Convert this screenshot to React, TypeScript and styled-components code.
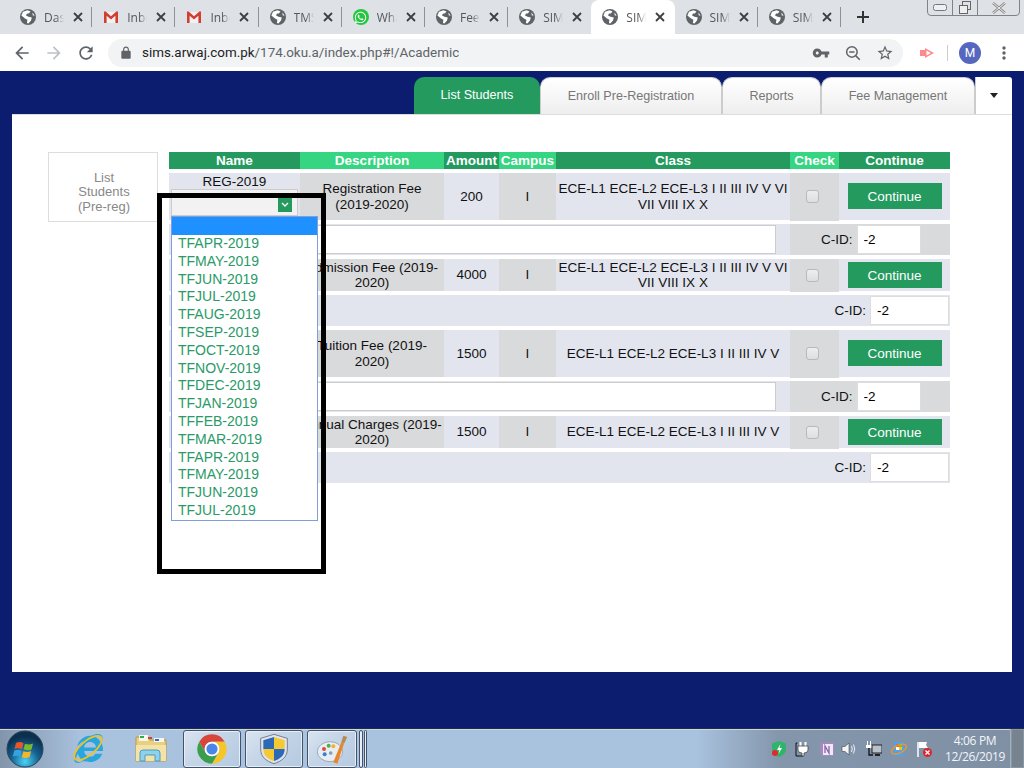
import React from "react";
import styled, { createGlobalStyle } from "styled-components";
import { FaInternetExplorer, FaWhatsapp } from "react-icons/fa";

const Global = createGlobalStyle`
  html, body { margin: 0; padding: 0; background: #0c1d6f; }
  * { box-sizing: border-box; }
`;
const green = "#249a5f";
const mint = "#36d582";
const blueCell = "#e2e5ee";
const grayCell = "#d9dadc";

const Root = styled.div`
  position: relative; width: 1024px; height: 768px; overflow: hidden;
  display: flex; flex-direction: column;
  font-family: "Liberation Sans", Arial, sans-serif; font-size: 13.5px; color: #111;
`;
/* Browser chrome */
const TabStrip = styled.div`
  height: 34px; background: #dee1e6; display: flex; align-items: stretch; padding-left: 9px; position: relative;
`;
const BrowserTab = styled.div<{ $active?: boolean; $sep?: boolean }>`
  width: 83.2px; flex: none; display: flex; align-items: center; padding: 0 9px 0 11px; gap: 8px; position: relative;
  background: ${p => (p.$active ? "#fff" : "transparent")};
  border-radius: 8px 8px 0 0;
  &::after {
    content: ""; position: absolute; right: 0; top: 7px; height: 20px; width: 1px;
    background: ${p => (p.$sep ? "#8e9196" : "transparent")};
  }
`;
const TabIcon = styled.svg`width: 16px; height: 16px; flex: none;`;
const WaBadge = styled.span`
  width: 16px; height: 16px; border-radius: 50%; background: #25c63f; color: #fff; flex: none;
  display: flex; align-items: center; justify-content: center; font-size: 13px;
`;
const TabTitle = styled.span`
  width: 20px; flex: none; overflow: hidden; white-space: nowrap; font: 12px "Open Sans", sans-serif; color: #55585c;
  -webkit-mask-image: linear-gradient(90deg, #000 60%, transparent);
  mask-image: linear-gradient(90deg, #000 60%, transparent);
`;
const CloseGlyph = styled.svg`width: 10px; height: 10px; flex: none; margin-left: 1px;`;
const NewTab = styled.svg`width: 14px; height: 14px; margin: 10px 0 0 15px; flex: none;`;
const WindowControls = styled.div`
  position: absolute; left: 927px; top: -1px; width: 93px; height: 17px; display: flex;
  border: 1px solid #7f8388; border-radius: 0 0 4px 4px;
`;
const WinButton = styled.div<{ $w: number; $last?: boolean }>`
  width: ${p => p.$w}px; display: flex; align-items: center; justify-content: center;
  border-right: ${p => (p.$last ? "0" : "1px solid #7f8388")};
`;
const Toolbar = styled.div`
  height: 37px; background: #fff; display: flex; align-items: center; padding: 0 0 0 12px;
`;
const NavIcon = styled.svg`width: 20px; height: 20px; flex: none; margin-right: 12px;`;
const Omnibox = styled.div`
  width: 795px; height: 28px; margin-right: 15px; background: #f1f3f4; border-radius: 14px;
  display: flex; align-items: center; padding: 0 9px 0 11px; flex: none;
`;
const Lock = styled.svg`width: 14px; height: 14px; flex: none; margin-right: 9px;`;
const Url = styled.div`flex: 1; font: 13.4px Roboto, sans-serif; color: #5f6368; white-space: nowrap;`;
const Host = styled.span`color: #202124;`;
const OmniIcon = styled.svg`width: 18px; height: 18px; flex: none; margin-left: 14px;`;
const ToolDivider = styled.div`width: 1px; height: 16px; background: #ccc; margin: 0 11px 0 11px; flex: none;`;
const ExtIcon = styled.svg`width: 18px; height: 16px; flex: none;`;
const Avatar = styled.div`
  width: 22px; height: 22px; border-radius: 50%; background: #5667c0; color: #fff; font: 12px Roboto, sans-serif;
  display: flex; align-items: center; justify-content: center; flex: none;
`;
const Dots = styled.svg`width: 4px; height: 14px; flex: none; margin-left: 21px;`;

/* Web page */
const Page = styled.main`
  flex: 1; background: #0c1d6f; padding: 6px 12px 56px; display: flex; flex-direction: column;
`;
const TabRow = styled.nav`height: 37px; display: flex; justify-content: flex-end; flex: none;`;
const PageTab = styled.div<{ $w: number; $active?: boolean }>`
  width: ${p => p.$w}px; height: 37px; border-radius: 10px 10px 0 0; display: flex; align-items: center; justify-content: center;
  font-size: 12.6px; padding-bottom: ${p => (p.$active ? "2px" : "1px")};
  color: ${p => (p.$active ? "#fff" : "#777")};
  background: ${p => (p.$active ? green : "linear-gradient(#ffffff, #eeeeee)")};
  border: ${p => (p.$active ? "0" : "1px solid #ccc")};
  border-bottom: 0;
`;
const CaretTab = styled.div`
  width: 37px; height: 37px; background: #fff; display: flex; align-items: center; justify-content: center;
  border-radius: 0 3px 0 0; border-left: 1px solid #ccc;
`;
const Caret = styled.div`width: 0; height: 0; border: 4px solid transparent; border-top: 5px solid #222; border-bottom: 0;`;
const Panel = styled.section`
  flex: 1; background: #fff; border-top: 1px solid #ddd; padding: 37px 62px 0 36px; display: flex; gap: 11px; align-items: flex-start;
`;
const SideBox = styled.div`
  width: 110px; height: 70px; border: 1px solid #ddd; display: flex; align-items: center; justify-content: center;
  text-align: center; color: #888; font-size: 13px; line-height: 14.5px; padding: 11px 26px 0 28px;
`;
const Table = styled.div`width: 781px; display: flex; flex-direction: column; gap: 4px;`;
const cols = "131px 144px 55px 57px 234px 49px 111px";
const HeadRow = styled.div`display: grid; grid-template-columns: ${cols}; height: 17px;`;
const HeadCell = styled.div<{ $light?: boolean }>`
  background: ${p => (p.$light ? mint : green)}; color: #fff; font-weight: bold; font-size: 13.5px; padding-bottom: 1px;
  display: flex; align-items: center; justify-content: center; white-space: nowrap;
`;
const DataRow = styled.div<{ $h: number }>`display: grid; grid-template-columns: ${cols}; height: ${p => p.$h}px;`;
const Cell = styled.div<{ $gray?: boolean }>`
  background: ${p => (p.$gray ? grayCell : blueCell)}; display: flex; align-items: center; justify-content: center;
  text-align: center; line-height: 15.2px; overflow: hidden; white-space: pre-line;
`;
const NameCell = styled(Cell)`
  flex-direction: column; justify-content: flex-start; padding-top: 1px; line-height: 15px; overflow: visible;
`;
const CheckCell = styled(Cell)`justify-content: flex-start; padding-left: 16px; height: calc(100% + 1px); position: relative;`;
const Check = styled.span<{ $tall: boolean }>`
  width: 13px; height: 13px; border: 1px solid #b9b9b9; border-radius: 3px; background: linear-gradient(#eee, #dedede);
  margin-top: ${p => (p.$tall ? "-2px" : "0")};
`;
const ContinueBtn = styled.button<{ $tall: boolean }>`
  width: 94px; height: 26px; border: 0; padding: 0; background: ${green}; color: #fff;
  margin-top: ${p => (p.$tall ? "-1px" : "0")};
  font: 13.5px "Liberation Sans", Arial, sans-serif;
`;
const FakeSelect = styled.div`
  width: 127px; height: 27px; flex: none; background: #f2f2f2; border: 1px solid #ccc; align-self: flex-start; margin-left: 2px;
  display: flex; justify-content: flex-end; align-items: flex-end; padding: 0 5px 3px 0; position: relative; z-index: 1;
`;
const SelectArrow = styled.div`width: 14px; height: 14px; background: ${green}; display: flex; align-items: center; justify-content: center;`;
const SubRow = styled.div`display: grid; grid-template-columns: 621px 160px; height: 31px;`;
const SubLeft = styled.div`background: ${blueCell}; padding: 1px 14px 1px 2px; display: flex;`;
const NoteInput = styled.input`
  flex: 1; min-width: 0; height: 29px; border: 1px solid #ccc; background: #fff; padding: 0 6px; font: 13.5px "Liberation Sans", Arial, sans-serif;
`;
const SubRight = styled.div`background: ${grayCell}; display: flex; align-items: center; padding-left: 31px; gap: 4px;`;
const WideSub = styled.div`
  background: ${blueCell}; height: 31px; display: flex; align-items: center; justify-content: flex-end; gap: 4px; padding-right: 1px;
`;
const Label = styled.span`font-size: 13.5px;`;
const IdInput = styled.input<{ $w: number }>`
  width: ${p => p.$w}px; height: 29px; border: 1px solid #ddd; background: #fff; padding: 0 6px; color: #000;
  font: 13.5px "Liberation Sans", Arial, sans-serif; outline: 0;
`;
/* Open list and hand-drawn annotation, both lying over the page */
const DropList = styled.ul`
  position: absolute; left: 171px; top: 216px; width: 147px; height: 305px; margin: 0; padding: 0; list-style: none;
  background: #fff; border: 1px solid #7f9fd6; z-index: 5;
`;
const Opt = styled.li<{ $sel?: boolean }>`
  height: ${p => (p.$sel ? "18px" : "17.8px")}; line-height: 17.8px; padding-left: 6px; font-size: 14px; color: #2a9a68;
  background: ${p => (p.$sel ? "#1e90ff" : "transparent")};
`;
const Frame = styled.div`
  position: absolute; left: 157px; top: 193px; width: 169px; height: 381px; border: 5px solid #000; z-index: 6; pointer-events: none;
`;

/* Taskbar */
const Taskbar = styled.footer`
  height: 40px; flex: none; display: flex; align-items: stretch; position: relative;
  background: linear-gradient(90deg, #8395aa 0, #a9c2de 8%, #a9c2de 68%, #8496ac 76%, #7f90a4 100%);
  border-top: 1px solid #1f2c4a; box-shadow: inset 0 1px 0 #c9d6e6;
`;
const Orb = styled.svg`width: 38px; height: 38px; margin: 0 0 0 6px; flex: none; align-self: center;`;
const QuickIcon = styled.div<{ $ml: number }>`
  margin-left: ${p => p.$ml}px; width: 36px; display: flex; align-items: center; justify-content: center; flex: none; font-size: 29px; position: relative; color: #2aa6df;
`;
const Ring = styled.svg`position: absolute; width: 36px; height: 36px; left: 0; top: 1px;`;
const TaskBtn = styled.div<{ $w: number; $ml: number }>`
  width: ${p => p.$w}px; margin-left: ${p => p.$ml}px; flex: none; margin-top: 1px;
  border: 1px solid #44536a; border-radius: 3px; display: flex; align-items: center; justify-content: center;
  background: linear-gradient(135deg, #d9e4f0 0, #c6d6e8 40%, #b4c9e0 100%); box-shadow: inset 0 0 0 1px #e7eef6;
`;
const TaskGlyph = styled.svg`width: 32px; height: 32px;`;
const Tray = styled.div`margin-left: auto; display: flex; align-items: center; flex: none; padding-right: 8px;`;
const TrayIcon = styled.svg<{ $mr: number }>`width: 16px; height: 16px; margin-right: ${p => p.$mr}px; flex: none;`;
const Clock = styled.div`
  width: 68px; margin-left: 9px; margin-right: 7px; padding-top: 1px; text-align: center; color: #f2f5f9; font: 12px/16.5px "Open Sans", sans-serif; letter-spacing: -.35px;
`;
const ShowDesktop = styled.div`
  position: absolute; right: 0; top: 0; bottom: 0; width: 14px; background: #77838f; border-left: 1px solid #a5b0bb; box-shadow: inset 0 0 0 1px #8a96a2;
`;

const Globe = () => (
  <TabIcon viewBox="0 0 16 16">
    <circle cx="8" cy="8" r="8" fill="#5f6368" />
    <path d="M3 2.8 7.5 1.2 10.5 2.4 8.8 4.6 7 4.5 6 6.6 8.6 7.8 11.8 8.4 11 11.6 8.4 14.6 6.9 14 7.4 10.8 5 9.4 1.4 6.4Z" fill="#fff" />
    <path d="M12.4 3.6 14.6 6.4 12.8 6.6Z" fill="#fff" />
  </TabIcon>
);
const Gmail = () => (
  <TabIcon viewBox="0 0 16 16">
    <rect x="1" y="3" width="14" height="11" fill="#f1f1f1" />
    <path d="M1 14V2.5h1.6L8 7.2l5.4-4.7H15V14h-2.6V6.8L8 10.4 3.6 6.8V14Z" fill="#d23f31" />
  </TabIcon>
);
const Close = ({ c = "#3c4043" }: { c?: string }) => (
  <CloseGlyph viewBox="0 0 10 10"><path d="M1 1l8 8M9 1l-8 8" stroke={c} strokeWidth="1.8" /></CloseGlyph>
);
const bTabs = [
  { k: "g", t: "Dashboard" }, { k: "m", t: "Inbox" }, { k: "m", t: "Inbox" }, { k: "g", t: "TMS" }, { k: "w", t: "WhatsApp" },
  { k: "g", t: "Fee" }, { k: "g", t: "SIMS" }, { k: "g", t: "SIMS", active: true }, { k: "g", t: "SIMS" }, { k: "g", t: "SIMS" },
];
const ChromeLogo = () => (
  <TaskGlyph viewBox="0 0 24 24">
    <path d="M21.53 6.5A11 11 0 0 0 2.47 6.5L7.24 14.75A5.5 5.5 0 0 1 12 6.5Z" fill="#d8453a" />
    <path d="M12 23A11 11 0 0 0 21.53 6.5L12 6.5A5.5 5.5 0 0 1 16.76 14.75Z" fill="#f5c52c" />
    <path d="M2.47 6.5A11 11 0 0 0 12 23L16.76 14.75A5.5 5.5 0 0 1 7.24 14.75Z" fill="#3a9e4c" />
    <circle cx="12" cy="12" r="5.5" fill="#fff" /><circle cx="12" cy="12" r="4.2" fill="#4a86e8" />
  </TaskGlyph>
);
const options = ["TFAPR", "TFMAY", "TFJUN", "TFJUL", "TFAUG", "TFSEP", "TFOCT", "TFNOV", "TFDEC", "TFJAN", "TFFEB", "TFMAR", "TFAPR", "TFMAY", "TFJUN", "TFJUL"];
const rows = [
  { name: "REG-2019", desc: "Registration Fee\n(2019-2020)", amt: "200", cls: "ECE-L1 ECE-L2 ECE-L3 I II III IV V VI VII VIII IX X", h: 47, sel: true, wide: false },
  { name: "", desc: "Admission Fee (2019-2020)", amt: "4000", cls: "ECE-L1 ECE-L2 ECE-L3 I II III IV V VI VII VIII IX X", h: 32, wide: true },
  { name: "", desc: "Tuition Fee (2019-2020)", amt: "1500", cls: "ECE-L1 ECE-L2 ECE-L3 I II III IV V", h: 47, wide: false },
  { name: "", desc: "Annual Charges (2019-2020)", amt: "1500", cls: "ECE-L1 ECE-L2 ECE-L3 I II III IV V", h: 32, wide: true },
];

export default function App() {
  return (
    <Root>
      <Global />
      <TabStrip>
        {bTabs.map((t, i) => (
          <BrowserTab key={i} $active={t.active} $sep={!t.active && i !== 6}>
            {t.k === "g" && <Globe />}
            {t.k === "m" && <Gmail />}
            {t.k === "w" && <WaBadge><FaWhatsapp /></WaBadge>}
            <TabTitle>{t.t}</TabTitle>
            <Close />
          </BrowserTab>
        ))}
        <NewTab viewBox="0 0 14 14"><path d="M7 1v12M1 7h12" stroke="#333" strokeWidth="2" /></NewTab>
        <WindowControls>
          <WinButton $w={25}><svg width="14" height="7"><rect x=".5" y=".5" width="13" height="6" rx="2" fill="#eef0f3" stroke="#777" /></svg></WinButton>
          <WinButton $w={25}><svg width="14" height="13"><rect x="4.5" y=".5" width="8" height="8" fill="none" stroke="#666" /><rect x="1.5" y="4.5" width="8" height="8" fill="#eee" stroke="#666" /></svg></WinButton>
          <WinButton $w={41} $last><svg width="16" height="12"><path d="M2 1l12 10M14 1L2 11" stroke="#888" strokeWidth="2.5" /><path d="M2 1l12 10M14 1L2 11" stroke="#eee" strokeWidth="1" /></svg></WinButton>
        </WindowControls>
      </TabStrip>
      <Toolbar>
        <NavIcon viewBox="0 0 24 24"><path fill="#5f6368" d="M20 11H7.83l5.59-5.59L12 4l-8 8 8 8 1.41-1.41L7.83 13H20v-2z" /></NavIcon>
        <NavIcon viewBox="0 0 24 24"><path fill="#bdc1c6" d="M12 4l-1.41 1.41L16.17 11H4v2h12.17l-5.58 5.59L12 20l8-8z" /></NavIcon>
        <NavIcon viewBox="0 0 24 24"><path fill="#5f6368" d="M17.65 6.35C16.2 4.9 14.21 4 12 4c-4.42 0-7.99 3.58-7.99 8s3.57 8 7.99 8c3.73 0 6.84-2.55 7.73-6h-2.08c-.82 2.33-3.04 4-5.65 4-3.31 0-6-2.69-6-6s2.69-6 6-6c1.66 0 3.14.69 4.22 1.78L13 11h7V4l-2.35 2.35z" /></NavIcon>
        <Omnibox>
          <Lock viewBox="0 0 24 24"><path fill="#5f6368" d="M18 8h-1V6c0-2.76-2.24-5-5-5S7 3.24 7 6v2H6c-1.1 0-2 .9-2 2v10c0 1.1.9 2 2 2h12c1.1 0 2-.9 2-2V10c0-1.1-.9-2-2-2zM9 6c0-1.66 1.34-3 3-3s3 1.34 3 3v2H9V6z" /></Lock>
          <Url><Host>sims.arwaj.com.pk</Host>/174.oku.a/index.php#!/Academic</Url>
          <OmniIcon viewBox="0 0 24 24"><path fill="#5f6368" d="M12.65 10C11.83 7.67 9.61 6 7 6c-3.31 0-6 2.69-6 6s2.69 6 6 6c2.61 0 4.83-1.67 5.65-4H17v4h4v-4h2v-4H12.65zM7 14c-1.1 0-2-.9-2-2s.9-2 2-2 2 .9 2 2-.9 2-2 2z" /></OmniIcon>
          <OmniIcon viewBox="0 0 24 24"><circle cx="10.5" cy="10.5" r="7" fill="none" stroke="#5f6368" strokeWidth="2" /><path d="M7 10.5h7M15.5 15.5 21 21" stroke="#5f6368" strokeWidth="2" /></OmniIcon>
          <OmniIcon viewBox="0 0 24 24"><path fill="#5f6368" d="M22 9.24l-7.19-.62L12 2 9.19 8.63 2 9.24l5.46 4.73L5.82 21 12 17.27 18.18 21l-1.63-7.03L22 9.24zM12 15.4l-3.76 2.27 1-4.28-3.32-2.88 4.38-.38L12 6.1l1.71 4.04 4.38.38-3.32 2.88 1 4.28L12 15.4z" /></OmniIcon>
        </Omnibox>
        <ExtIcon viewBox="0 0 18 16"><path d="M2 5h5V3l9 5-9 5v-2H2Z" fill="#ff8a8e" /><path d="M8.500 5.600 12.800 8 8.500 10.400Z" fill="#fff" /></ExtIcon>
        <ToolDivider />
        <Avatar>M</Avatar>
        <Dots viewBox="0 0 4 14"><circle cx="2" cy="2" r="1.7" fill="#5f6368" /><circle cx="2" cy="7" r="1.7" fill="#5f6368" /><circle cx="2" cy="12" r="1.7" fill="#5f6368" /></Dots>
      </Toolbar>
      <Page>
        <TabRow>
          <PageTab $w={126} $active>List Students</PageTab>
          <PageTab $w={182}>Enroll Pre-Registration</PageTab>
          <PageTab $w={99}>Reports</PageTab>
          <PageTab $w={154}>Fee Management</PageTab>
          <CaretTab><Caret /></CaretTab>
        </TabRow>
        <Panel>
          <SideBox>List Students (Pre-reg)</SideBox>
          <Table>
            <HeadRow>
              <HeadCell>Name</HeadCell><HeadCell $light>Description</HeadCell><HeadCell>Amount</HeadCell>
              <HeadCell $light>Campus</HeadCell><HeadCell>Class</HeadCell><HeadCell $light>Check</HeadCell><HeadCell>Continue</HeadCell>
            </HeadRow>
            {rows.map((r, i) => (
              <React.Fragment key={i}>
                <DataRow $h={r.h}>
                  <NameCell>
                    {r.name}
                    {r.sel && (
                      <FakeSelect>
                        <SelectArrow><svg width="8" height="6"><path d="M1 1l3 3 3-3" fill="none" stroke="#fff" strokeWidth="1.3" /></svg></SelectArrow>
                      </FakeSelect>
                    )}
                  </NameCell>
                  <Cell $gray>{r.desc}</Cell>
                  <Cell>{r.amt}</Cell>
                  <Cell $gray>I</Cell>
                  <Cell>{r.cls}</Cell>
                  <CheckCell $gray><Check $tall={r.h > 40} /></CheckCell>
                  <Cell><ContinueBtn $tall={r.h > 40}>Continue</ContinueBtn></Cell>
                </DataRow>
                {r.wide ? (
                  <WideSub><Label>C-ID:</Label><IdInput $w={79} defaultValue="-2" /></WideSub>
                ) : (
                  <SubRow>
                    <SubLeft><NoteInput readOnly /></SubLeft>
                    <SubRight><Label>C-ID:</Label><IdInput $w={64} defaultValue="-2" /></SubRight>
                  </SubRow>
                )}
              </React.Fragment>
            ))}
          </Table>
        </Panel>
      </Page>
      <Taskbar>
        <Orb viewBox="0 0 38 38">
          <defs>
            <radialGradient id="orb" cx="50%" cy="85%" r="70%"><stop offset="0" stopColor="#4fd3f5" /><stop offset=".55" stopColor="#14618f" /><stop offset="1" stopColor="#0d2f4e" /></radialGradient>
          </defs>
          <circle cx="19" cy="19" r="18" fill="url(#orb)" stroke="#28465f" />
          <path d="M10 13c3-1.5 5-1 7.5.2l-1.5 6c-2.500-1-5-1.500-7.500-.2Z" fill="#e8562a" />
          <path d="M19 13.700c2.500 1 5 1.300 8-.2l-1.500 6c-3 1.300-5 1-8-.2Z" fill="#7cb92e" />
          <path d="M8.300 20.500c2.500-1.200 5-1 7.300.2l-1.500 6c-2.500-1.200-5-1.300-7.400 0Z" fill="#35a3e0" />
          <path d="M17.300 21.200c2.700 1 5 1.200 7.800-.2l-1.500 6c-3 1.300-5.300 1.200-7.800.2Z" fill="#f5b72a" />
        </Orb>
        <QuickIcon $ml={26}>
          <FaInternetExplorer />
          <Ring viewBox="0 0 36 36"><ellipse cx="18" cy="18" rx="17" ry="7" transform="rotate(-40 18 18)" fill="none" stroke="#f2c21e" strokeWidth="1.800" /></Ring>
        </QuickIcon>
        <QuickIcon $ml={27}>
          <svg width="34" height="30" viewBox="0 0 34 30">
            <path d="M2 3h12l2 3h16v21H2Z" fill="#e9cf80" stroke="#b99a4a" />
            <rect x="5" y="1" width="9" height="6" fill="#f8f6ea" /><rect x="6" y="2" width="4" height="2" fill="#2bb04a" />
            <rect x="20" y="4" width="10" height="4" fill="#f8f6ea" /><rect x="21" y="5" width="4" height="2" fill="#2a6fd0" />
            <rect x="14" y="3" width="4" height="2" fill="#d84030" />
            <path d="M2 11h30v16H2Z" fill="#f4e3a6" />
            <path d="M6 27V19q0-3 3-3h14q3 0 3 3v8h-5v-6H11v6Z" fill="#8fd0ec" stroke="#4d9cc0" />
          </svg>
        </QuickIcon>
        <TaskBtn $w={58} $ml={14}><ChromeLogo /></TaskBtn>
        <TaskBtn $w={58} $ml={4}>
          <TaskGlyph viewBox="0 0 24 24">
            <path d="M12 1 22 4v8c0 6-4 9-10 11C6 21 2 18 2 12V4Z" fill="#dfe4ea" stroke="#667" strokeWidth=".6" />
            <path d="M12 3 4 5.500V12h8Z" fill="#2a6ab8" /><path d="M12 3l8 2.500V12h-8Z" fill="#f5c932" />
            <path d="M4 12h8v9c-4.500-1.500-8-4-8-9Z" fill="#f5c932" /><path d="M20 12h-8v9c4.500-1.500 8-4 8-9Z" fill="#2a6ab8" />
          </TaskGlyph>
        </TaskBtn>
        <TaskBtn $w={50} $ml={4}>
          <TaskGlyph viewBox="0 0 24 24">
            <ellipse cx="10.500" cy="14" rx="9.500" ry="7.500" fill="#e8edf2" stroke="#8a9aae" strokeWidth=".6" />
            <circle cx="6" cy="12" r="1.500" fill="#e04a3c" /><circle cx="9.500" cy="9.500" r="1.500" fill="#4fb04a" /><circle cx="13" cy="10" r="1.500" fill="#f0b030" /><circle cx="6.500" cy="16" r="1.500" fill="#3a7fd0" /><circle cx="11" cy="15" r="1.400" fill="#8aa0b8" />
            <path d="M13 22 19 7l2 1-5 15Z" fill="#e9852a" /><path d="M19 7l1.500-5 3 1-2.500 5Z" fill="#b58a55" />
          </TaskGlyph>
        </TaskBtn>
        <TaskBtn $w={4} $ml={2} />
        <TaskBtn $w={3} $ml={1} />
        <Tray>
          <TrayIcon $mr={8} viewBox="0 0 16 16"><path d="M8 0l7 2.500V8c0 4-3 6.500-7 8-4-1.500-7-4-7-8V2.500Z" fill="#2fb56a" /><path d="M9.500 3 6 9h2.500L7.500 13 11 7H8.500Z" fill="#fff" /><circle cx="4" cy="12" r="3" fill="#e02a2a" /></TrayIcon>
          <TrayIcon $mr={8} viewBox="0 0 16 16"><path d="M2.500 2H1v13h7" fill="none" stroke="#111" /><path d="M5.500 1v4M10.500 1v4" stroke="#fff" strokeWidth="2" /><path d="M3 5h10v4q0 3-4 3v3H7v-3q-4 0-4-3Z" fill="#fff" stroke="#333" strokeWidth=".7" /></TrayIcon>
          <TrayIcon $mr={6} viewBox="0 0 16 16"><rect x="1" y="1" width="14" height="14" rx="2" fill="#a48abc" /><rect x="4" y="3" width="10" height="11" fill="#efe9f5" /><path d="M6 12V5l4 7V5" fill="none" stroke="#8a62ae" strokeWidth="1.300" /></TrayIcon>
          <TrayIcon $mr={9} viewBox="0 0 16 16"><path d="M1 5.500h3L8 2v12L4 10.500H1Z" fill="#f2f4f6" stroke="#444" strokeWidth=".6" /><path d="M10.500 5q1.500 3 0 6M12.500 3.500q2.500 4.500 0 9" fill="none" stroke="#eef" strokeWidth="1" /></TrayIcon>
          <TrayIcon $mr={9} viewBox="0 0 16 16"><path d="M1.500 0v4M4.500 0v4" stroke="#fff" /><rect x="0" y="4" width="6" height="3" fill="#fff" /><path d="M3 7v7h4" fill="none" stroke="#111" strokeWidth="1.300" /><rect x="6" y="4" width="10" height="8" fill="#b9c2cb" stroke="#222" /><rect x="9" y="13" width="5" height="2" fill="#222" /></TrayIcon>
          <TrayIcon $mr={9} viewBox="0 0 16 16"><rect x="3" y="1" width="10" height="14" fill="#5a9fe0" /><rect x="5" y="3" width="3" height="3" fill="#e85c3a" /><rect x="8" y="3" width="3" height="3" fill="#7cc040" /><rect x="5" y="6" width="3" height="3" fill="#fff" /><rect x="8" y="6" width="3" height="3" fill="#f5c030" /><ellipse cx="8" cy="8" rx="8" ry="4" fill="none" stroke="#f09a20" strokeWidth="1.200" transform="rotate(-25 8 8)" /></TrayIcon>
          <TrayIcon $mr={0} viewBox="0 0 16 16"><path d="M2 1v15" stroke="#fff" strokeWidth="1.500" /><path d="M3 1h8l-1 3 2 3H3Z" fill="#fff" /><circle cx="11.500" cy="11.500" r="4.500" fill="#d8262c" /><path d="M9.500 9.500l4 4M13.500 9.500l-4 4" stroke="#fff" strokeWidth="1.300" /></TrayIcon>
          <Clock>4:06 PM<br />12/26/2019</Clock>
        </Tray>
        <ShowDesktop />
      </Taskbar>
      <DropList>
        <Opt $sel />
        {options.map((o, i) => <Opt key={i}>{o}-2019</Opt>)}
      </DropList>
      <Frame />
    </Root>
  );
}
